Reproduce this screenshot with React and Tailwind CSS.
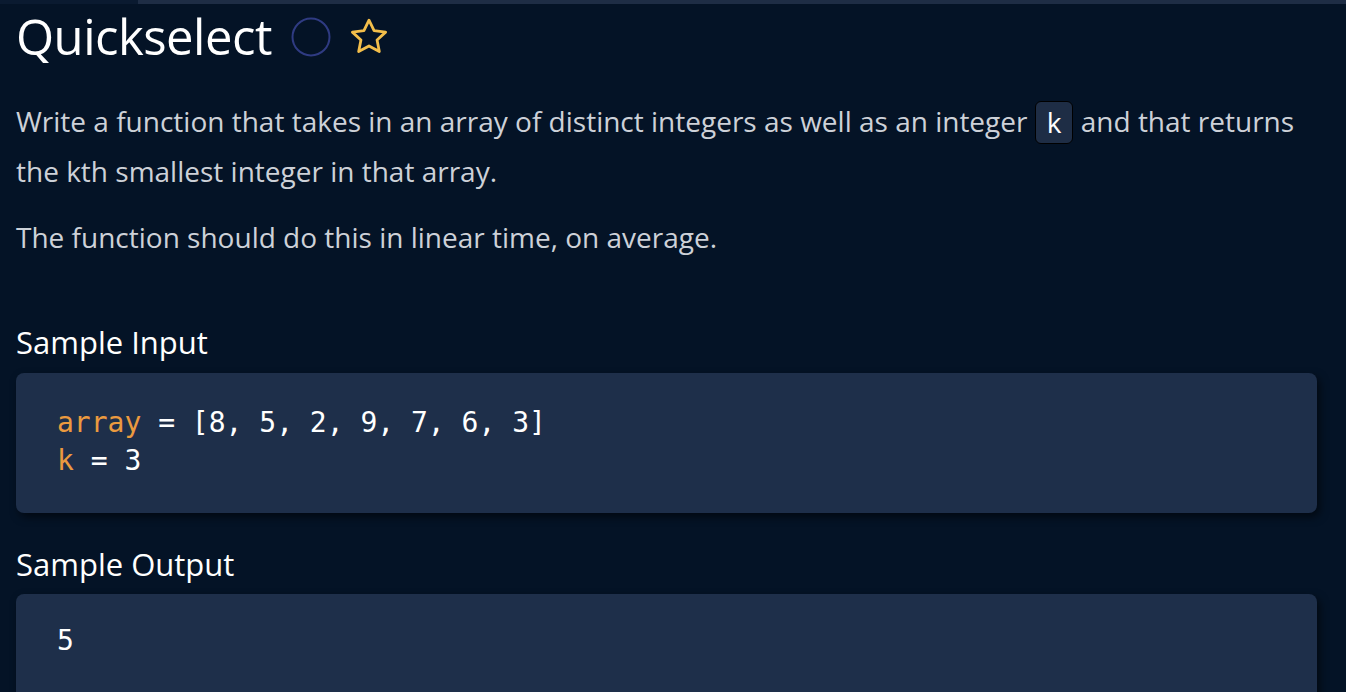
import React from 'react';

const Circle = () => (
  <svg width="40" height="40" viewBox="0 0 40 40" className="shrink-0">
    <circle cx="20" cy="20" r="18.5" fill="none" stroke="#2f3b82" strokeWidth="2" />
  </svg>
);

const Star = () => (
  <svg width="44" height="42" viewBox="0 0 24 24" className="shrink-0">
    <path
      d="M12 2.4l2.9 6 6.6.8-4.9 4.5 1.3 6.6L12 17.1l-5.9 3.2 1.3-6.6-4.9-4.5 6.6-.8z"
      fill="none"
      stroke="#f3be4a"
      strokeWidth="1.6"
      strokeLinejoin="round"
    />
  </svg>
);

const CodeCard = ({ children, className = '' }) => (
  <div
    className={`bg-[#1e2f4a] rounded-lg shadow-[3px_4px_8px_rgba(0,0,0,0.55)] px-[41px] text-[28px] leading-[38px] text-white ${className}`}
    style={{ fontFamily: '"DejaVu Sans Mono", "Liberation Mono", monospace' }}
  >
    {children}
  </div>
);

export default function App() {
  return (
    <div
      className="min-h-screen bg-[#041326] text-[#cdd1d8] overflow-hidden"
      style={{ fontFamily: '"Open Sans", "Noto Sans", sans-serif' }}
    >
      {/* top strip */}
      <div className="flex h-[4px]">
        <div className="w-[138px] bg-[#0a1a30]" />
        <div className="flex-1 bg-[#1e2d45]" />
      </div>

      <div className="pl-[16px] pr-[29px]">
        {/* Title */}
        <div className="flex items-center gap-[19px] h-[66px]">
          <h1 className="text-[49px] font-medium text-white tracking-[-0.5px]">Quickselect</h1>
          <div className="flex items-center gap-[16px]">
            <Circle />
            <Star />
          </div>
        </div>

        {/* Description */}
        <p className="mt-[26px] text-[28px] leading-[50px]">
          Write a function that takes in an array of distinct integers as well as an integer{' '}
          <span className="inline-block bg-[#1e2d45] border border-black rounded-[6px] px-[11px] leading-[41px] text-white align-middle -mt-[4px]">
            k
          </span>{' '}
          and that returns the kth smallest integer in that array.
        </p>
        <p className="mt-[16px] text-[28px] leading-[50px]">
          The function should do this in linear time, on average.
        </p>

        {/* Sample Input */}
        <h2 className="mt-[60px] text-[31px] leading-[40px] font-medium text-white">Sample Input</h2>
        <CodeCard className="mt-[11px] pt-[31px] pb-[33px]">
          <div>
            <span className="text-[#eb9a3f]">array</span> = [8, 5, 2, 9, 7, 6, 3]
          </div>
          <div>
            <span className="text-[#eb9a3f]">k</span> = 3
          </div>
        </CodeCard>

        {/* Sample Output */}
        <h2 className="mt-[31px] text-[31px] leading-[40px] font-medium text-white">Sample Output</h2>
        <CodeCard className="mt-[10px] pt-[28px] pb-[40px]">
          <div>5</div>
        </CodeCard>
      </div>
    </div>
  );
}
